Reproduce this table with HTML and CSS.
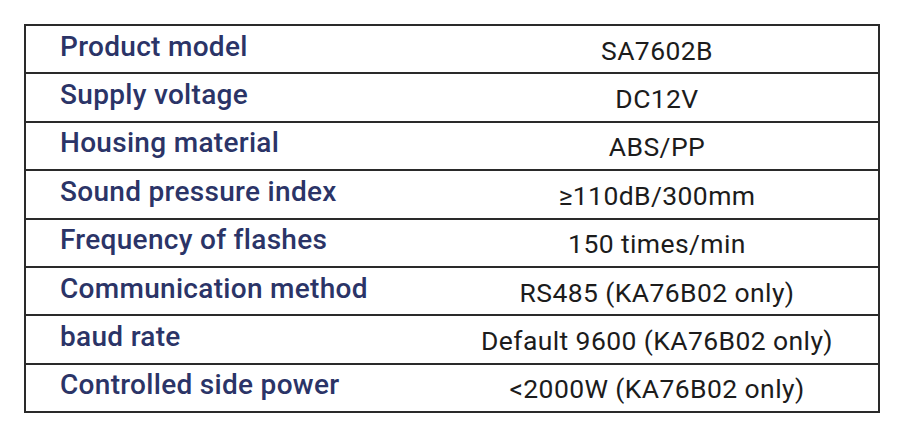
FILE: index.html
```html
<!DOCTYPE html>
<html>
<head>
<meta charset="utf-8">
<link rel="stylesheet" href="styles.css">
</head>
<body>
<div class="spec">
  <div class="row"><div class="label">Product model</div><div class="value">SA7602B</div></div>
  <div class="row"><div class="label">Supply voltage</div><div class="value">DC12V</div></div>
  <div class="row"><div class="label">Housing material</div><div class="value">ABS/PP</div></div>
  <div class="row"><div class="label">Sound pressure index</div><div class="value">≥110dB/300mm</div></div>
  <div class="row"><div class="label">Frequency of flashes</div><div class="value">150 times/min</div></div>
  <div class="row"><div class="label">Communication method</div><div class="value">RS485 (KA76B02 only)</div></div>
  <div class="row"><div class="label">baud rate</div><div class="value">Default 9600 (KA76B02 only)</div></div>
  <div class="row"><div class="label">Controlled side power</div><div class="value">&lt;2000W (KA76B02 only)</div></div>
</div>
</body>
</html>
```
FILE: styles.css
```css
html, body {
  margin: 0;
  padding: 0;
  background: #ffffff;
}
body {
  padding: 24px 0 0 24px;
}
.spec {
  width: 852px;
  border: 2px solid #2a2a2a;
  display: flex;
  flex-direction: column;
}
.row {
  display: grid;
  grid-template-columns: 410px 1fr;
  height: 46.4px;
  border-bottom: 2px solid #2a2a2a;
  align-items: center;
}
.row:last-child {
  border-bottom: none;
}
.label {
  padding-left: 34px;
  padding-bottom: 6px;
  font-family: Roboto, "Liberation Sans", sans-serif;
  font-weight: 500;
  font-size: 28px;
  letter-spacing: 0.3px;
  color: #2b3467;
  white-space: nowrap;
}
.value {
  text-align: center;
  padding-top: 2px;
  font-family: Roboto, "Liberation Sans", sans-serif;
  font-weight: 400;
  font-size: 26.5px;
  letter-spacing: 0.4px;
  color: #1c1c1c;
  white-space: nowrap;
}
```
